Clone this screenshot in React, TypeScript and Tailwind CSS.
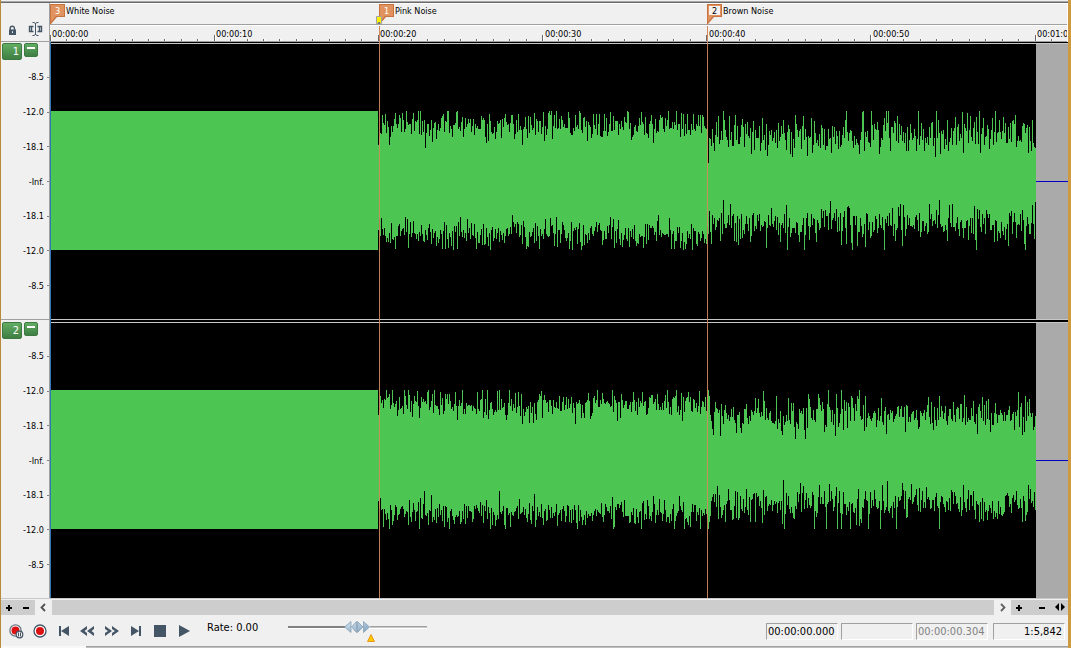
import { useState } from 'react'

const PX_PER_SECOND = 16.417
const DURATION = 60
const WAVE_WIDTH = 985
const WAVE_HEIGHT = 277
const CENTER = 138.5
const PEAK = 69.5

const markers = [
    { id: 3, name: 'White Noise', x: 0 },
    { id: 1, name: 'Pink Noise', x: 329 },
    { id: 2, name: 'Brown Noise', x: 657, selected: true },
]

const levels = ['-8.5', '-12.0', '-18.1', '-Inf.', '-18.1', '-12.0', '-8.5']

type Peaks = Record<number, number>

// Column index -> amplitude, for the columns that stand out of the noise
const channels: { id: number; seed: number; top: Peaks; bottom: Peaks }[] = [
    {
        id: 1,
        seed: 11,
        top: {
            327: 36, 348: 66, 355: 70, 362: 68, 367: 70, 374: 33, 397: 70, 406: 70, 430: 65, 435: 38,
            454: 67, 461: 66, 463: 42, 497: 68, 498: 70, 501: 42, 517: 69, 524: 66, 528: 70, 542: 67,
            559: 69, 577: 69, 600: 66, 617: 70, 642: 67, 651: 66, 657: 18, 667: 65, 678: 65, 684: 66,
            702: 60, 727: 58, 739: 27, 752: 65, 756: 25, 811: 69, 812: 70, 820: 70, 828: 27, 835: 70,
            837: 70, 843: 60, 846: 65, 867: 70, 885: 70, 889: 27, 919: 65, 925: 64, 928: 70, 944: 70,
            948: 61, 959: 58, 981: 61,
        },
        bottom: {
            327: 50, 330: 38, 344: 69, 356: 39, 391: 69, 394: 69, 397: 68, 406: 69, 475: 69, 488: 69,
            499: 38, 505: 37, 506: 67, 559: 37, 567: 40, 571: 67, 592: 68, 607: 35, 672: 20, 683: 61,
            687: 65, 715: 68, 736: 70, 753: 70, 779: 21, 790: 65, 801: 70, 806: 66, 833: 70, 851: 66,
            852: 25, 888: 20, 901: 24, 925: 70, 946: 61, 957: 66, 974: 70, 984: 22,
        },
    },
    {
        id: 2,
        seed: 47,
        top: {
            327: 45, 335: 70, 353: 70, 389: 68, 431: 70, 436: 70, 446: 69, 448: 70, 458: 70, 467: 68,
            471: 36, 478: 37, 524: 36, 537: 67, 561: 70, 606: 66, 630: 67, 656: 64, 657: 70, 658: 64,
            661: 31, 669: 24, 707: 61, 712: 69, 731: 25, 737: 62, 767: 66, 768: 62, 790: 70, 800: 64,
            830: 62, 835: 26, 877: 63, 888: 64, 913: 65, 971: 25, 974: 64,
        },
        bottom: {
            327: 42, 368: 70, 373: 32, 380: 36, 439: 70, 448: 32, 459: 68, 506: 67, 526: 70, 563: 68,
            602: 37, 633: 70, 649: 70, 657: 70, 658: 63, 662: 35, 682: 60, 704: 63, 732: 21, 733: 70,
            749: 24, 763: 70, 775: 70, 786: 70, 790: 70, 799: 70, 829: 70, 845: 70, 888: 70, 942: 60,
            946: 60,
        },
    },
]

function createRandom(seed: number) {
    let state = seed
    return () => {
        state = (state + 0x6d2b79f5) | 0
        let t = Math.imul(state ^ (state >>> 15), 1 | state)
        t = (t + Math.imul(t ^ (t >>> 7), 61 | t)) ^ t
        return ((t ^ (t >>> 14)) >>> 0) / 4294967296
    }
}

function amplitudes(seed: number, peaks: Peaks) {
    const random = createRandom(seed)
    const result: number[] = []
    for (let x = 0; x < WAVE_WIDTH; x++) {
        const noise = (random() + random() + random() - 1.5) * 2
        const spike = random() < 0.12 ? random() * 14 : 0
        let value = PEAK
        if (x >= 327) {
            value = x < 657 ? 53 + noise * 7 + spike : 43 + noise * 9 + spike
            value = Math.round(value) + 0.5
        }
        if (peaks[x]) value = peaks[x] - 0.5
        result.push(Math.min(PEAK, value))
    }
    return result
}

function wavePath(seed: number, top: Peaks, bottom: Peaks) {
    const upper = amplitudes(seed, top)
    const lower = amplitudes(seed + 1, bottom)
    return upper.map((a, x) => `M${x} ${CENTER - a}h1V${CENTER + lower[x]}h-1z`).join('')
}

const paths = channels.map((c) => wavePath(c.seed, c.top, c.bottom))

function Flag({ id, selected }: { id: number; selected?: boolean }) {
    return (
        <span className="relative block h-5 w-4 shrink-0">
            <svg className="absolute inset-0" width="16" height="20" viewBox="0 0 16 20">
                <path d="M0 0h15v13H7L1 20H0z" fill="#c8733f" />
                <path d="M1 1h13v11H6L1 18z" fill="#e0935f" />
                {selected && <path d="M2 2h11v9H2z" fill="#f4f1ee" />}
            </svg>
            <span
                className={`absolute inset-x-0 top-0 h-3 pr-px text-center text-[9px] leading-[14px] ${
                    selected ? 'text-black' : 'text-white'
                }`}
            >
                {id}
            </span>
        </span>
    )
}

function TimeRuler() {
    const ticks = Array.from({ length: DURATION + 2 }, (_, i) => i)
    return (
        <div className="relative h-[17px] overflow-hidden border-b border-[#a0a0a0] border-t border-t-white">
            <svg className="absolute bottom-0 left-0" width="1100" height="6" shapeRendering="crispEdges">
                {ticks.map((i) => {
                    const x = Math.floor(i * PX_PER_SECOND)
                    const y = i % 10 === 0 ? 0 : 4
                    return (
                        <g key={i}>
                            <rect x={x} y={y} width="1" height={6 - y} fill="#696969" />
                            <rect x={x + 1} y={y} width="1" height={6 - y} fill="#fff" />
                        </g>
                    )
                })}
            </svg>
            {[0, 10, 20, 30, 40, 50, 60].map((s) => (
                <span
                    key={s}
                    className="absolute top-0.5 text-[9px] leading-3 whitespace-nowrap"
                    style={{ left: Math.round(s * PX_PER_SECOND) + 2 }}
                >
                    {s < 60 ? `00:00:${String(s).padStart(2, '0')}` : '00:01:00'}
                </span>
            ))}
            {markers.slice(1).map((m) => (
                <span key={m.id} className="absolute inset-y-0 w-px bg-[#d68a5c]" style={{ left: m.x }} />
            ))}
        </div>
    )
}

function ChannelPanel({ id }: { id: number }) {
    const green = 'bg-linear-to-b from-[#62ad64] to-[#3f7f43] border border-[#3d7a41] rounded-xs text-white'
    return (
        <div className="flex min-h-0 flex-1 flex-col">
            <div className="flex h-[18px] shrink-0 items-start gap-0.5 pt-px pl-px">
                <button
                    aria-label={`Select channel ${id}`}
                    className={`h-[17px] w-5 shrink-0 pr-0.5 text-right text-[11px] leading-4 ${green}`}
                >
                    {id}
                </button>
                <button
                    aria-label={`Minimize channel ${id}`}
                    className={`flex h-[14px] w-[14px] shrink-0 justify-center pt-[3px] ${green}`}
                >
                    <span className="h-0.5 w-2 bg-white" />
                </button>
            </div>
            {levels.map((level, i) => (
                <div key={i} className="flex min-h-0 flex-1 items-center justify-end gap-[3px] text-[9px] leading-3">
                    {level}
                    <span className="h-px w-0.5 bg-[#808080]" />
                </div>
            ))}
            <div className="h-4 shrink-0" />
        </div>
    )
}

function Waveform({ path }: { path: string }) {
    return (
        <div className="relative flex min-h-0 flex-1 overflow-hidden">
            <svg
                className="h-full shrink-0 bg-black"
                width={WAVE_WIDTH}
                viewBox={`0 0 ${WAVE_WIDTH} ${WAVE_HEIGHT}`}
                preserveAspectRatio="none"
                shapeRendering="crispEdges"
            >
                <path d={path} fill="#4dc552" />
            </svg>
            <div className="flex flex-1 flex-col border-t border-black bg-[#aaaaaa]">
                <div className="flex-1" />
                <div className="h-px bg-[#0000c0]" />
                <div className="flex-1" />
            </div>
            <div className="absolute inset-x-0 top-px h-px bg-[#c8c8c8]" />
        </div>
    )
}

function TransportIcon({ name }: { name: string }) {
    return (
        <svg width="16" height="16" viewBox="0 0 16 16" fill="#445566">
            {name === 'Record' && (
                <>
                    <circle cx="8" cy="8" r="6" fill="#fff" stroke="#445566" strokeWidth="1.3" />
                    <circle cx="8" cy="8" r="4" fill="#dd1111" />
                </>
            )}
            {name === 'Arm record' && (
                <>
                    <circle cx="7.5" cy="7.5" r="5.6" fill="#fff" stroke="#6a7580" strokeWidth="1.3" />
                    <circle cx="7.5" cy="7.5" r="4" fill="#dd1111" />
                    <circle cx="11.5" cy="11.5" r="3.3" fill="#f0f0f0" stroke="#445566" strokeWidth="1.2" />
                    <path d="M10 9.5h1v4h-1zM12 9.5h1v4h-1z" />
                </>
            )}
            {name === 'Go to start' && <path d="M3 3h2v10H3zM13 3v10L5 8z" />}
            {name === 'Rewind' && <path d="M7 3v3L4.500 8 7 10v3L0 8zM14 3v3l-2.500 2 2.500 2v3L7 8z" />}
            {name === 'Forward' && <path d="M1 3v3l3 2-3 2v3l7-5zM8 3v3l3 2-3 2v3l7-5z" />}
            {name === 'Go to end' && <path d="M3 3v10l8-5zM11 3h2v10h-2z" />}
            {name === 'Stop' && <path d="M2 2h12v12H2z" />}
            {name === 'Play' && <path d="M3 2v12l11-6z" />}
        </svg>
    )
}

const transport = ['Arm record', 'Record', 'Go to start', 'Rewind', 'Forward', 'Go to end', 'Stop', 'Play']

function ZoomIcon({ d }: { d: string }) {
    return (
        <svg width="12" height="12" viewBox="0 0 12 12" shapeRendering="crispEdges">
            <path d={d} fill="#000" />
        </svg>
    )
}

const PLUS = 'M5 3h2v2h2v2H7v2H5V7H3V5h2z'
const MINUS = 'M3 5h6v2H3z'

export default function App() {
    const [rate, setRate] = useState(0)
    const box = 'flex h-[17px] w-[72px] items-center border border-[#a0a0a0] border-r-white border-b-white'

    return (
        <div className="flex h-screen flex-col overflow-hidden border-r-[3px] border-l border-l-[#b98a3c] border-r-[#cd9a3f] bg-[#f0f0f0] font-['DejaVu_Sans_Condensed','DejaVu_Sans',sans-serif] text-black">
            <div className="h-[3px] shrink-0 border-b border-[#696969] bg-[#f0f0f0]">
                <div className="mt-px h-px bg-[#a8a8a8]" />
            </div>

            {/* Markers and time ruler */}
            <header className="flex h-[39px] shrink-0">
                <div className="flex w-[49px] shrink-0 items-end gap-2.5 border-r border-b border-[#a0a0a0] pb-1 pl-1.5">
                    <button aria-label="Lock">
                        <svg className="block" width="11" height="14" viewBox="0 0 11 14">
                            <path d="M3.2 7V5.3a2.1 2.1 0 0 1 4.2 0V7" fill="none" stroke="#445566" strokeWidth="1.4" />
                            <path d="M2 6.5h7V12H2z" fill="#445566" />
                            <path d="M5 8.2h1V10H5z" fill="#f0f0f0" />
                        </svg>
                    </button>
                    <button aria-label="Edit tool">
                        <svg className="block" width="16" height="16" viewBox="0 0 16 16" fill="none" stroke="#445566">
                            <path d="M4.500 1.500h1.500l1.500 1 1.500-1h1.500M7.500 2v12M4.500 14.500h1.500l1.500-1 1.500 1h1.500" />
                            <path d="M5.500 5.500h-4v5h4M3.500 5.500v5M9.500 5.500h4v5h-4M11.500 5.500v5" strokeWidth="1.4" />
                        </svg>
                    </button>
                </div>
                <div className="min-w-0 flex-1 border-r border-white">
                    <div className="relative h-[22px] border-t border-b border-t-white border-b-[#a0a0a0]">
                        {markers.map((m) => (
                            <button
                                key={m.id}
                                className="absolute top-0 flex text-[9px] leading-[14px] whitespace-nowrap"
                                style={{ left: m.x }}
                            >
                                <Flag id={m.id} selected={m.selected} />
                                {m.name}
                            </button>
                        ))}
                        <svg className="absolute top-3 left-[326px]" width="6" height="8" viewBox="0 0 6 8">
                            <path d="M.5.5h5v7h-5z" fill="#fff200" stroke="#a0a0a0" />
                            <path d="M2 6h2v2H2z" fill="#777" />
                        </svg>
                    </div>
                    <TimeRuler />
                </div>
            </header>

            {/* Channels */}
            <main className="flex min-h-0 flex-1">
                <div className="flex w-12 shrink-0 flex-col">
                    <ChannelPanel id={1} />
                    <div className="mb-px h-px bg-[#a0a0a0]" />
                    <ChannelPanel id={2} />
                </div>
                <div className="w-px bg-[#a0a0a0]" />
                <div className="relative flex min-w-0 flex-1 flex-col border-l border-[#2f78b8]">
                    <Waveform path={paths[0]} />
                    <div className="h-0.5 border-t border-[#c8c8c8] bg-black" />
                    <Waveform path={paths[1]} />
                    {markers.slice(1).map((m) => (
                        <div
                            key={m.id}
                            className="absolute inset-y-0 -left-px w-px bg-[#d68a5c]/90"
                            style={{ marginLeft: m.x }}
                        />
                    ))}
                </div>
            </main>

            {/* Scroll bar */}
            <div className="flex h-[17px] shrink-0 border-t border-[#c8c8c8] pt-px">
                <div className="flex w-[34px] items-center gap-[5px] bg-[#cdcdcd] pl-0.5">
                    <button aria-label="Zoom in vertically"><ZoomIcon d={PLUS} /></button>
                    <button aria-label="Zoom out vertically"><ZoomIcon d={MINUS} /></button>
                </div>
                <button aria-label="Scroll left" className="flex w-[17px] items-center justify-center">
                    <svg width="7" height="9" viewBox="0 0 7 9" fill="none" stroke="#505050" strokeWidth="1.8">
                        <path d="M5 1L1.500 4.500 5 8" />
                    </svg>
                </button>
                <div className="flex-1 bg-[#cdcdcd]" />
                <button aria-label="Scroll right" className="flex w-[17px] items-center justify-center">
                    <svg width="7" height="9" viewBox="0 0 7 9" fill="none" stroke="#606060" strokeWidth="1.8">
                        <path d="M2 1l3.500 3.500L2 8" />
                    </svg>
                </button>
                <div className="flex w-[57px] items-center bg-[#cdcdcd] pl-0.5">
                    <button aria-label="Zoom in"><ZoomIcon d={PLUS} /></button>
                    <button aria-label="Zoom out" className="ml-[11px]"><ZoomIcon d={MINUS} /></button>
                    <button aria-label="Zoom window" className="ml-1.5">
                        <svg width="12" height="12" viewBox="0 0 12 12">
                            <path d="M5 1v8L1 5zM7 1v8l4-4z" />
                        </svg>
                    </button>
                </div>
            </div>

            {/* Transport */}
            <footer className="flex h-[31px] shrink-0 items-center pl-[7px]">
                <div className="flex gap-2">
                    {transport.map((name) => (
                        <button key={name} aria-label={name}>
                            <TransportIcon name={name} />
                        </button>
                    ))}
                </div>
                <label htmlFor="rate" className="mb-1.5 ml-[15px] w-[81px] text-[11px] leading-4 whitespace-nowrap">
                    Rate: {rate.toFixed(2)}
                </label>
                <div className="relative h-6 w-[140px]">
                    <svg width="140" height="24" viewBox="0 0 140 24">
                        <defs>
                            <linearGradient id="thumb" x1="0" y1="0" x2="1" y2="1">
                                <stop offset="0" stopColor="#d5e4f2" />
                                <stop offset="1" stopColor="#7c9fbd" />
                            </linearGradient>
                        </defs>
                        <path d="M0 7h58v2H0z" fill="#808080" />
                        <path d="M0 9h139v1H0z" fill="#fff" />
                        <path d="M82 7h57v1H82z" fill="#a0a0a0" />
                        <path d="M82 8h57v1H82z" fill="#c8c8c8" />
                        <g fill="url(#thumb)" stroke="#7e98ae" strokeWidth="0.7">
                            <path d="M63 2.5v11L56.5 8zM68.5 2.5v11L63.5 8zM69.5 2.5v11L75 8zM75.5 2.5v11L81.5 8z" />
                        </g>
                        <path d="M83 15.5l3.5 7h-7z" fill="#ffc800" stroke="#e49a20" />
                    </svg>
                    <input
                        id="rate"
                        type="range"
                        min={-20}
                        max={20}
                        step={0.01}
                        value={rate}
                        onChange={(e) => setRate(Number(e.target.value))}
                        className="absolute inset-0 w-full opacity-0"
                    />
                </div>
                <div className="ml-auto flex gap-[3px] pt-0.5 pr-[3px] text-[11px] leading-4">
                    <div className={`${box} pl-px`}>00:00:00.000</div>
                    <div className={box} />
                    <div className={`${box} pl-px text-[#808080]`}>00:00:00.304</div>
                    <div className={`${box} ml-0.5 justify-end pr-0.5`}>1:5,842</div>
                </div>
            </footer>
            <div className="flex h-0.5 shrink-0">
                <div className="w-[85px] bg-[#f8f8f8]" />
                <div className="flex-1 border-t border-[#a0a0a0] bg-[#c0c0c0]" />
            </div>
        </div>
    )
}
